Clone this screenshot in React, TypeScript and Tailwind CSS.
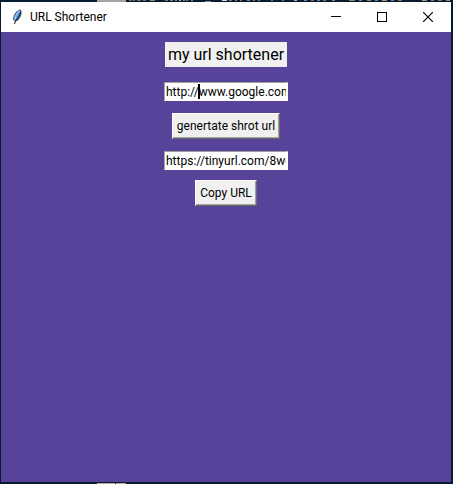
import { useState } from "react";

const fragments = [
  [129, 3, "#8a6a50"], [133, 2, "#5a7a9a"], [137, 4, "#8a6a50"], [143, 3, "#5a7a9a"],
  [150, 5, "#9a8a70"], [165, 3, "#5a7a9a"], [170, 3, "#9a7a60"], [175, 2, "#5fa090"],
  [179, 2, "#c0b0a0"], [183, 2, "#6a8aa8"], [186, 2, "#9a7a60"], [191, 2, "#6a8aa8"],
  [222, 5, "#d8d8d8"], [229, 3, "#9a6a50"], [235, 2, "#6a8aa8"], [240, 2, "#9a6a50"],
  [247, 3, "#6a8aa8"], [253, 2, "#a06a48"], [258, 2, "#6a8aa8"], [271, 2, "#9a6a50"],
  [282, 2, "#6a8aa8"], [294, 3, "#c0b0a0"], [304, 3, "#6a8aa8"], [311, 3, "#9a6a50"],
  [317, 3, "#6a8aa8"], [323, 3, "#9a6a50"], [332, 3, "#6a8aa8"], [349, 6, "#a08060"],
  [359, 3, "#6a8aa8"], [367, 4, "#9a8a70"], [375, 3, "#6a8aa8"], [382, 5, "#b09880"],
  [391, 3, "#6a8aa8"], [398, 4, "#9a6a50"], [422, 5, "#b09880"], [431, 3, "#6a8aa8"],
  [438, 4, "#9a6a50"], [446, 4, "#9a8a70"],
] as const;

function Backdrop() {
  return (
    <svg className="block h-[2px] w-full" viewBox="0 0 453 2" preserveAspectRatio="none" aria-hidden="true">
      <rect x="97" width="29" height="2" fill="#a5a3a3" />
      <rect x="205" y="1" width="6" height="1" fill="#8b8b93" />
      {fragments.map(([x, w, color]) => (
        <rect key={x} x={x} width={w} height="1" fill={color} />
      ))}
    </svg>
  );
}

function BackdropFoot() {
  return (
    <svg className="block h-[2px] w-full" viewBox="0 0 453 2" preserveAspectRatio="none" aria-hidden="true">
      <rect x="97" y="1" width="18" height="1" fill="#b5b0ac" />
      <rect x="116" y="1" width="10" height="1" fill="#b5b0ac" />
    </svg>
  );
}

function Feather() {
  return (
    <svg width="16" height="16" viewBox="0 0 16 16" aria-hidden="true">
      <path d="M10.5 1 L12 1.5 L12 5 L11 8 L9 11 L6.5 12 L4.5 10.5 L5 7 L7 3.5 Z" fill="#4a8ad4" stroke="#2b3440" strokeWidth="0.8" />
      <path d="M10.3 2 L8 5 L6.3 8 L6 10.5" fill="none" stroke="#8fc2f5" strokeWidth="1.8" />
      <path d="M11.8 3 L10 7.5 L6.5 12 L5.5 15" fill="none" stroke="#10151c" strokeWidth="1" />
    </svg>
  );
}

const control = "flex h-full w-[46px] items-center justify-center text-black";
const entry =
  "block h-[19px] w-[124px] rounded-none border border-t-[#a0a0a0] border-l-[#a0a0a0] border-r-white border-b-white bg-white px-px text-xs leading-4 text-black outline-none";
const raised =
  "h-[26px] border border-t-white border-l-white border-r-[#696969] border-b-[#696969] bg-[#f0f0f0] px-1 text-xs leading-4 whitespace-nowrap text-black shadow-[inset_-1px_-1px_0_#a0a0a0]";

export default function App() {
  const [url, setUrl] = useState("http://www.google.com");
  const [shortUrl, setShortUrl] = useState("https://tinyurl.com/8wcjq");

  return (
    <div className="flex h-screen flex-col bg-[#071c30] font-['Roboto','Noto_Sans',sans-serif]">
      <Backdrop />
      <div className="mr-[2px] ml-px flex min-h-0 flex-1 flex-col bg-[#57449a]">
        <header className="flex h-[30px] shrink-0 items-center bg-white pl-2">
          <Feather />
          <span className="ml-[5px] text-xs leading-4 text-black">URL Shortener</span>
          <div className="ml-auto flex h-full">
            <button type="button" aria-label="Minimize" className={control}>
              <svg width="10" height="10" viewBox="0 0 10 10" shapeRendering="crispEdges">
                <path d="M0 4h10v1H0z" fill="currentColor" />
              </svg>
            </button>
            <button type="button" aria-label="Maximize" className={control}>
              <svg width="10" height="10" viewBox="0 0 10 10" shapeRendering="crispEdges">
                <path d="M.5.5h9v9h-9z" fill="none" stroke="currentColor" />
              </svg>
            </button>
            <button type="button" aria-label="Close" className={control}>
              <svg width="10" height="10" viewBox="0 0 10 10">
                <path d="M0 0l10 10M10 0L0 10" fill="none" stroke="currentColor" strokeWidth="1.2" />
              </svg>
            </button>
          </div>
        </header>
        <main className="flex flex-1 flex-col items-center pt-[10px]">
          <h1 className="h-[25px] bg-[#f0f0f0] px-[3px] text-base leading-[25px] whitespace-nowrap text-black">
            my url shortener
          </h1>
          <div className="relative mt-[15px]">
            <input aria-label="URL" className={entry} value={url} onChange={(e) => setUrl(e.target.value)} />
            <span className="absolute top-[2px] left-[34px] h-[15px] w-[2px] bg-black" />
          </div>
          <button type="button" className={`${raised} mt-3`}>genertate shrot url</button>
          <input aria-label="Short URL" className={`${entry} mt-3`} value={shortUrl} onChange={(e) => setShortUrl(e.target.value)} />
          <button type="button" className={`${raised} mt-[10px]`}>Copy URL</button>
        </main>
      </div>
      <BackdropFoot />
    </div>
  );
}
